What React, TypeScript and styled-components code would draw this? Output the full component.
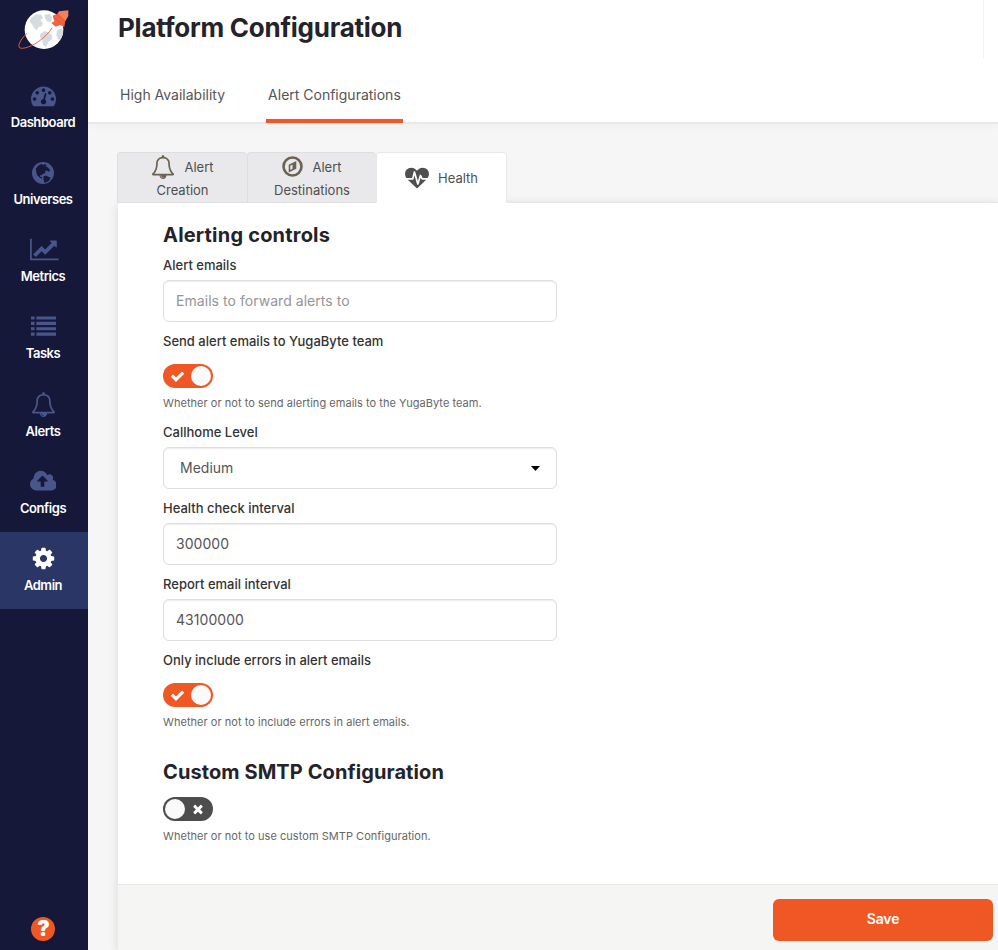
import React from 'react';
import styled, { createGlobalStyle } from 'styled-components';

const GlobalStyle = createGlobalStyle`
  *, *::before, *::after { box-sizing: border-box; }
  body {
    margin: 0;
    background: #f6f6f6;
    color: #333;
    font-family: Inter, "Liberation Sans", sans-serif;
    font-size: 14px;
    overflow: hidden;
  }
  h1, h2, p { margin: 0; }
  svg { display: block; }
`;

const Page = styled.div`
  display: flex;
  height: 950px;
`;

/* Sidebar */

const Sidebar = styled.nav`
  display: flex;
  flex-direction: column;
  align-items: center;
  width: 88px;
  flex: none;
  padding-bottom: 9px;
  background: #151838;
`;

const LogoLink = styled.a`
  width: 100%;
  height: 69px;
  padding: 8px 0 0 16.6px;
`;

const NavItem = styled.a<{ $active?: boolean }>`
  display: flex;
  flex-direction: column;
  align-items: center;
  width: 100%;
  height: 77.17px;
  padding: 14px 2px 0 0;
  background: ${(p) => (p.$active ? '#293666' : 'transparent')};
  color: ${(p) => (p.$active ? '#fff' : '#49568c')};
`;

const NavIcon = styled.span<{ $shift?: number }>`
  display: flex;
  align-items: center;
  justify-content: center;
  height: 25px;
  padding-left: ${(p) => p.$shift ?? 0}px;
`;

const NavLabel = styled.span`
  margin-top: 4.95px;
  color: #fff;
  font-size: 13px;
  font-weight: 600;
  line-height: 18px;
  letter-spacing: -0.44px;
`;

const HelpButton = styled.button`
  display: flex;
  align-items: center;
  justify-content: center;
  width: 24px;
  height: 24px;
  margin: auto 2px 0 0;
  padding: 0 0 0 1px;
  border: 0;
  border-radius: 50%;
  background: #ef5824;
  color: #fff;
  font: 900 21px/24px Inter, sans-serif;
`;

/* Header */

const Main = styled.main`
  display: flex;
  flex-direction: column;
  flex: 1;
  min-width: 0;
`;

const Header = styled.header`
  display: flex;
  flex-direction: column;
  height: 124px;
  flex: none;
  background: #fff;
  border-bottom: 2px solid #e8e8e8;
  box-shadow: 0 2px 10px rgba(0, 0, 0, 0.03);
`;

const TitleBar = styled.div`
  width: 896px;
  height: 59px;
  flex: none;
  padding: 11px 0 0 30px;
  border-right: 1px solid #f3f3f3;
`;

const Title = styled.h1`
  color: #232329;
  font-size: 26px;
  font-weight: 650;
  line-height: 34px;
  letter-spacing: -0.25px;
`;

const PageTabs = styled.div`
  display: flex;
  gap: 39px;
  height: 64px;
  flex: none;
  padding-left: 30px;
`;

const PageTab = styled.a<{ $active?: boolean }>`
  padding: 27px 2px 0;
  border-bottom: 4px solid ${(p) => (p.$active ? '#ef5824' : 'transparent')};
  color: #555;
  font-size: 14px;
  line-height: 18px;
`;

/* Alert section */

const Section = styled.section`
  display: flex;
  flex-direction: column;
  flex: 1;
  padding: 28px 0 0 29px;
`;

const SubTabs = styled.div`
  display: flex;
  height: 50px;
`;

const SubTab = styled.a<{ $width: number; $active?: boolean }>`
  display: flex;
  align-items: center;
  justify-content: center;
  width: ${(p) => p.$width}px;
  height: 51px;
  padding-top: ${(p) => (p.$active ? 0 : 1)}px;
  border: 1px solid ${(p) => (p.$active ? '#e8e8e8' : '#dedee0')};
  border-right-width: ${(p) => (p.$active ? 1 : 0)}px;
  border-bottom-color: ${(p) => (p.$active ? '#fff' : '#dedee0')};
  border-radius: 4px 4px 0 0;
  background: ${(p) => (p.$active ? '#fff' : '#e9e9eb')};
  color: #4f4f4f;
  font-size: 13px;
  line-height: 22px;
  z-index: 1;
`;

const TabStack = styled.span`
  display: flex;
  flex-direction: column;
  align-items: center;
`;

const TabLine = styled.span<{ $gap: number }>`
  display: flex;
  align-items: center;
  gap: ${(p) => p.$gap}px;
  height: 23px;
`;

const Panel = styled.div`
  display: flex;
  flex-direction: column;
  flex: 1;
  margin-left: 1px;
  border-top: 1px solid #e6e6e6;
  background: #fff;
  box-shadow: 0 2px 10px rgba(0, 0, 0, 0.12);
`;

const Form = styled.form`
  display: flex;
  flex-direction: column;
  align-items: flex-start;
  flex: 1;
  padding: 19px 0 0 45px;
`;

const Heading = styled.h2<{ $spacing: number; $gap: number }>`
  margin-bottom: ${(p) => p.$gap}px;
  color: #232329;
  font-size: 20px;
  font-weight: 650;
  line-height: 26px;
  letter-spacing: ${(p) => p.$spacing}px;
`;

const Field = styled.div<{ $height: number }>`
  display: flex;
  flex-direction: column;
  align-items: flex-start;
  height: ${(p) => p.$height}px;
`;

const Label = styled.label<{ $gap?: number }>`
  color: #333;
  font-size: 13px;
  font-weight: 500;
  line-height: 18px;
  margin-bottom: ${(p) => p.$gap ?? 6}px;
`;

const TextInput = styled.input`
  width: 394px;
  height: 42px;
  padding: 0 12px 2px;
  border: 1px solid #dedee0;
  border-radius: 6px;
  outline: 0;
  background: #fff;
  box-shadow: inset 0 1px 1px rgba(0, 0, 0, 0.075);
  color: #555;
  font: 400 14px Inter, sans-serif;
  letter-spacing: 0.05px;

  &::placeholder { color: #959595; opacity: 1; }
`;

const Select = styled.div`
  display: flex;
  align-items: center;
  justify-content: space-between;
  width: 394px;
  height: 42px;
  padding: 0 16px 1px;
  border: 1px solid #dedee0;
  border-radius: 6px;
  background: #fff;
  box-shadow: inset 0 1px 1px rgba(0, 0, 0, 0.075);
  color: #555;
`;

const Switch = styled.button<{ $on: boolean }>`
  display: flex;
  flex-direction: ${(p) => (p.$on ? 'row' : 'row-reverse')};
  align-items: center;
  justify-content: space-between;
  width: 50px;
  height: 24px;
  flex: none;
  margin-bottom: 6px;
  padding: ${(p) => (p.$on ? '0 2px 0 7px' : '0 8px 0 2px')};
  border: 0;
  border-radius: 12px;
  background: ${(p) => (p.$on ? '#ef5824' : '#4d4d4d')};
  color: #fff;
`;

const Knob = styled.span`
  width: 20px;
  height: 20px;
  border-radius: 50%;
  background: #fafafa;
`;

const Help = styled.p`
  color: #666;
  font-size: 11px;
  line-height: 18px;
  letter-spacing: 0.04px;
`;

const Footer = styled.footer`
  display: flex;
  justify-content: flex-end;
  height: 66px;
  flex: none;
  padding: 14px 5px 0 0;
  border-top: 1px solid #e7e7e7;
  background: #f5f5f3;
`;

const SaveButton = styled.button`
  width: 220px;
  height: 42px;
  padding: 0 0 3px;
  border: 0;
  border-radius: 6px;
  background: #ef5824;
  color: #fff;
  font: 600 14px Inter, sans-serif;
  letter-spacing: -0.15px;
`;

/* Icons */

const PATHS = {
  dashboard:
    'M384 1152q0-53-37.5-90.5t-90.5-37.5-90.5 37.5-37.5 90.5 37.5 90.5 90.5 37.5 90.5-37.5 37.5-90.5zm192-448q0-53-37.5-90.5t-90.5-37.5-90.5 37.5-37.5 90.5 37.5 90.5 90.5 37.5 90.5-37.5 37.5-90.5zm428 481l101-382q6-26-7.5-48.5t-38.5-29.5-48 6.5-30 39.5l-101 382q-60 5-107 43.5t-63 98.5q-20 77 20 146t117 89 146-20 89-117q16-60-6-117t-72-91zm660-33q0-53-37.5-90.5t-90.5-37.5-90.5 37.5-37.5 90.5 37.5 90.5 90.5 37.5 90.5-37.5 37.5-90.5zm-640-640q0-53-37.5-90.5t-90.5-37.5-90.5 37.5-37.5 90.5 37.5 90.5 90.5 37.5 90.5-37.5 37.5-90.5zm448 192q0-53-37.5-90.5t-90.5-37.5-90.5 37.5-37.5 90.5 37.5 90.5 90.5 37.5 90.5-37.5 37.5-90.5zm320 448q0 261-141 483-19 29-54 29h-1402q-35 0-54-29-141-221-141-483 0-182 71-348t191-286 286-191 348-71 348 71 286 191 191 286 71 348z',
  metrics:
    'M2048 1536v128h-2048v-1536h128v1408h1920zm-128-1248v435q0 21-19.5 29.5t-35.5-7.5l-121-121-633 633q-10 10-23 10t-23-10l-233-233-416 416-192-192 585-585q10-10 23-10t23 10l233 233 464-464-121-121q-16-16-7.5-35.5t29.5-19.5h435q14 0 23 9t9 23z',
  tasks:
    'M0 1330h256v224h-256zM0 946h256v224h-256zM0 562h256v224h-256zM0 178h256v224h-256zM384 1330h1408v224h-1408zM384 946h1408v224h-1408zM384 562h1408v224h-1408zM384 178h1408v224h-1408z',
  bell:
    'M912 1696q0-16-16-16-59 0-101.5-42.5t-42.5-101.5q0-16-16-16t-16 16q0 73 51.5 124.5t124.5 51.5q16 0 16-16zm-666-288h1300q-266-300-266-832 0-51-24-105t-69-103-121.5-80.5-169.5-31.5-169.5 31.5-121.5 80.5-69 103-24 105q0 532-266 832zm1482 0q0 52-38 90t-90 38h-448q0 106-75 181t-181 75-181-75-75-181h-448q-52 0-90-38t-38-90q50-42 91-88t85-119.5 74.5-158.5 50-206 19.5-260q0-152 117-282.5t307-158.5q-8-19-8-39 0-40 28-68t68-28 68 28 28 68q0 20-8 39 190 28 307 158.5t117 282.5q0 139 19.5 260t50 206 74.5 158.5 85 119.5 91 88z',
  cloud:
    'M1280 864q0-14-9-23l-352-352q-9-9-23-9t-23 9l-351 351q-10 12-10 24 0 14 9 23t23 9h224v352q0 13 9.5 22.5t22.5 9.5h192q13 0 22.5-9.5t9.5-22.5v-352h224q13 0 22.5-9.5t9.5-22.5zm640 288q0 159-112.5 271.5t-271.5 112.5h-1088q-185 0-316.5-131.5t-131.5-316.5q0-130 70-240t188-165q-2-30-2-43 0-212 150-362t362-150q156 0 285.5 87t188.5 231q71-62 166-62 106 0 181 75t75 181q0 76-41 138 130 31 213.5 135.5t83.5 238.5z',
  gear:
    'M1152 896q0-106-75-181t-181-75-181 75-75 181 75 181 181 75 181-75 75-181zm512-109v222q0 12-8 23t-20 13l-185 28q-19 54-39 91 35 50 107 138 10 12 10 25t-9 23q-27 37-99 108t-94 71q-12 0-26-9l-138-108q-44 23-91 38-16 136-29 186-7 28-36 28h-222q-14 0-24.5-8.5t-11.5-21.5l-28-184q-49-16-90-37l-141 107q-10 9-25 9-14 0-25-11-126-114-165-168-7-10-7-23 0-12 8-23 15-21 51-66.5t54-70.5q-27-50-41-99l-183-27q-13-2-21-12.5t-8-23.5v-222q0-12 8-23t19-13l186-28q14-46 39-92-40-57-107-138-10-12-10-24 0-10 9-23 26-36 98.5-107.5t94.5-71.5q13 0 26 10l138 107q44-23 91-38 16-136 29-186 7-28 36-28h222q14 0 24.5 8.5t11.5 21.5l28 184q49 16 90 37l142-107q9-9 24-9 13 0 25 10 129 119 165 170 7 8 7 22 0 12-8 23-15 21-51 66.5t-54 70.5q26 50 41 98l183 28q13 2 21 12.5t8 23.5z',
  heartbeat:
    'M1280 1024h305q-5 6-10 10.5t-9 7.5l-3 4-623 600q-18 18-44 18t-44-18l-624-602q-5-2-21-20h369q22 0 39.5-13.5t22.5-34.5l70-281 190 667q6 20 23 33t39 13q21 0 38-13t23-33l146-485 56 112q18 35 57 35zm512-428q0 145-103 300h-369l-111-221q-8-17-25.5-27t-36.5-8q-45 5-56 46l-129 430-196-686q-6-20-23.5-33t-39.5-13-39 13.5-22 34.5l-116 464h-423q-103-155-103-300 0-220 127-344t351-124q62 0 126.5 21.5t120 58 95.5 68.5 76 68q36-36 76-68t95.5-68.5 120-58 126.5-21.5q224 0 351 124t127 344z',
  check:
    'M1671 566q0 40-28 68l-724 724-136 136q-28 28-68 28t-68-28l-136-136-362-362q-28-28-28-68t28-68l136-136q28-28 68-28t68 28l294 295 656-657q28-28 68-28t68 28l136 136q28 28 28 68z',
  times:
    'M1490 1322q0 40-28 68l-136 136q-28 28-68 28t-68-28l-294-294-294 294q-28 28-68 28t-68-28l-136-136q-28-28-28-68t28-68l294-294-294-294q-28-28-28-68t28-68l136-136q28-28 68-28t68 28l294 294 294-294q28-28 68-28t68 28l136 136q28 28 28 68t-28 68l-294 294 294 294q28 28 28 68z',
};

interface GlyphProps {
  name: keyof typeof PATHS;
  size: number;
  wide?: number;
}

const Glyph = ({ name, size, wide = 1792 }: GlyphProps) => (
  <svg width={(size * wide) / 1792} height={size} viewBox={`0 0 ${wide} 1792`} fill="currentColor" aria-hidden>
    <path d={PATHS[name]} />
  </svg>
);

const GlobeIcon = () => (
  <svg width="22" height="22" viewBox="0 0 64 64" aria-hidden>
    <circle cx="32" cy="32" r="32" fill="currentColor" />
    <g fill="#151838">
      <path d="M11 19l8-9 8-4 6 3 5-3 5 4-5 3 6 1 9 9-4 5-6-3-5 1 1 6-8 3-4 4-4-1 1 5 5 1 1 5-7-3-9-9z" />
      <path d="M33 42l7-3 6 3 8 4-3 7-8 5-6 3-3-9z" />
    </g>
  </svg>
);

const BellMark = styled.span`
  display: flex;
  color: #6b6351;
`;

const CompassIcon = () => (
  <svg width="21" height="21" viewBox="0 0 21 21" fill="none" stroke="#6b6351" aria-hidden>
    <circle cx="10.5" cy="10.5" r="9" strokeWidth="2.6" />
    <path d="M7.5 9.2l6-3v6l-6 3z" strokeWidth="1.6" />
    <path d="M10.5 7.7l3-1.5v6l-3 1.5z" fill="#6b6351" stroke="none" />
  </svg>
);

const CaretMark = styled.span`
  display: flex;
  padding-top: 1px;
`;

const Caret = () => (
  <CaretMark>
    <svg width="9" height="5" viewBox="0 0 9 5" aria-hidden>
      <path d="M0 0h9L4.5 5z" fill="#000" />
    </svg>
  </CaretMark>
);

const Logo = () => (
  <svg width="53.33" height="43.33" viewBox="50 25 160 130" aria-hidden>
    <clipPath id="moon">
      <circle cx="131" cy="90" r="58" />
    </clipPath>
    <circle cx="131" cy="90" r="58" fill="#fff" />
    <g clipPath="url(#moon)" fill="#d5dcdf">
      <path d="M92 54l16-10 16 2 4 10-8 6 8 8-4 10-10 2-4 10-8-6-8-14-6-6z" />
      <path d="M132 46l16-4 8 12-4 14-10-2-8-10z" />
      <path d="M120 102l12-8 12 4 12 10-2 12-10 8-6 14-10-6-2-14-8-10z" />
      <path d="M170 92l14-6 6 14-6 18-10 2-6-14z" />
    </g>
    <path
      d="M80 101C64 115 53 134 56 142c4 9 32 2 57-15 18-13 33-27 42-42"
      fill="none"
      stroke="#e8603f"
      strokeWidth="2.8"
    />
    <path d="M176 35l28-3v17l-16 28-24-22z" fill="#f2805c" />
    <path d="M157 48l16-6 22 20-3 20-12-6-14 5-13-11 9-5z" fill="#ef6543" />
    <path d="M168 46c12 3 20 10 25 22M160 56c10 2 18 9 22 17" fill="none" stroke="#d9532f" strokeWidth="2" />
  </svg>
);

const NAV = [
  { label: 'Dashboard', icon: <Glyph name="dashboard" size={25} /> },
  { label: 'Universes', icon: <GlobeIcon /> },
  { label: 'Metrics', icon: <Glyph name="metrics" size={25} wide={2048} />, shift: 3 },
  { label: 'Tasks', icon: <Glyph name="tasks" size={25} /> },
  { label: 'Alerts', icon: <Glyph name="bell" size={25} /> },
  { label: 'Configs', icon: <Glyph name="cloud" size={25} wide={1920} /> },
  { label: 'Admin', icon: <Glyph name="gear" size={25} />, active: true },
];

const Toggle = ({ on }: { on: boolean }) => (
  <Switch type="button" role="switch" aria-checked={on} $on={on}>
    <Glyph name={on ? 'check' : 'times'} size={on ? 15 : 14} />
    <Knob />
  </Switch>
);

export default function App() {
  return (
    <Page>
      <GlobalStyle />
      <Sidebar>
        <LogoLink>
          <Logo />
        </LogoLink>
        {NAV.map((item) => (
          <NavItem key={item.label} $active={item.active}>
            <NavIcon $shift={item.shift}>{item.icon}</NavIcon>
            <NavLabel>{item.label}</NavLabel>
          </NavItem>
        ))}
        <HelpButton>?</HelpButton>
      </Sidebar>
      <Main>
        <Header>
          <TitleBar>
            <Title>Platform Configuration</Title>
          </TitleBar>
          <PageTabs>
            <PageTab>High Availability</PageTab>
            <PageTab $active>Alert Configurations</PageTab>
          </PageTabs>
        </Header>
        <Section>
          <SubTabs>
            <SubTab $width={130}>
              <TabStack>
                <TabLine $gap={9}>
                  <BellMark>
                    <Glyph name="bell" size={24} />
                  </BellMark>
                  Alert
                </TabLine>
                <TabLine $gap={0}>Creation</TabLine>
              </TabStack>
            </SubTab>
            <SubTab $width={129}>
              <TabStack>
                <TabLine $gap={9}>
                  <CompassIcon />
                  Alert
                </TabLine>
                <TabLine $gap={0}>Destinations</TabLine>
              </TabStack>
            </SubTab>
            <SubTab $width={131} $active>
              <TabLine $gap={9}>
                <Glyph name="heartbeat" size={24} />
                Health
              </TabLine>
            </SubTab>
          </SubTabs>
          <Panel>
            <Form>
              <Heading $spacing={0.2} $gap={8}>
                Alerting controls
              </Heading>
              <Field $height={76}>
                <Label>Alert emails</Label>
                <TextInput placeholder="Emails to forward alerts to" />
              </Field>
              <Field $height={91}>
                <Label $gap={14}>Send alert emails to YugaByte team</Label>
                <Toggle on />
                <Help>Whether or not to send alerting emails to the YugaByte team.</Help>
              </Field>
              <Field $height={76}>
                <Label>Callhome Level</Label>
                <Select>
                  Medium
                  <Caret />
                </Select>
              </Field>
              <Field $height={76}>
                <Label>Health check interval</Label>
                <TextInput defaultValue="300000" />
              </Field>
              <Field $height={76}>
                <Label>Report email interval</Label>
                <TextInput defaultValue="43100000" />
              </Field>
              <Field $height={108}>
                <Label $gap={14}>Only include errors in alert emails</Label>
                <Toggle on />
                <Help>Whether or not to include errors in alert emails.</Help>
              </Field>
              <Heading $spacing={0.09} $gap={12}>
                Custom SMTP Configuration
              </Heading>
              <Toggle on={false} />
              <Help>Whether or not to use custom SMTP Configuration.</Help>
            </Form>
            <Footer>
              <SaveButton>Save</SaveButton>
            </Footer>
          </Panel>
        </Section>
      </Main>
    </Page>
  );
}
